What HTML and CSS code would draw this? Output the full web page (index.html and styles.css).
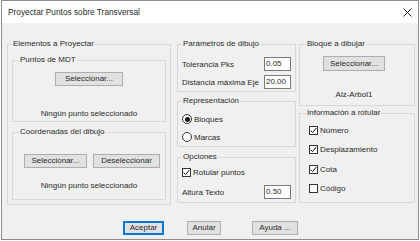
FILE: index.html
```html
<!DOCTYPE html>
<html lang="es">
<head>
<meta charset="utf-8">
<title>Proyectar Puntos sobre Transversal</title>
<link rel="stylesheet" href="styles.css">
</head>
<body>
<div class="window">
  <div class="titlebar">
    <span class="title">Proyectar Puntos sobre Transversal</span>
    <svg class="close" width="9" height="9" viewBox="0 0 9 9"><path d="M0.5 0.5L8.5 8.5M8.5 0.5L0.5 8.5" stroke="#222" stroke-width="1" fill="none"/></svg>
  </div>
  <div class="content">
    <div class="columns">
      <fieldset class="group g-elem">
        <legend>Elementos a Proyectar</legend>
        <fieldset class="group g-mdt">
          <legend>Puntos de MDT</legend>
          <button class="btn btn-sel1">Seleccionar...</button>
          <div class="status st1">Ningún punto seleccionado</div>
        </fieldset>
        <fieldset class="group g-coord">
          <legend>Coordenadas del dibujo</legend>
          <div class="btnrow">
            <button class="btn btn-sel2">Seleccionar...</button>
            <button class="btn btn-desel">Deseleccionar</button>
          </div>
          <div class="status st2">Ningún punto seleccionado</div>
        </fieldset>
      </fieldset>

      <div class="col col-mid">
        <fieldset class="group g-param">
          <legend>Parámetros de dibujo</legend>
          <div class="field"><span>Tolerancia Pks</span><span class="input">0.05</span></div>
          <div class="field"><span>Distancia máxima Eje</span><span class="input">20.00</span></div>
        </fieldset>
        <fieldset class="group g-repr">
          <legend>Representación</legend>
          <div class="opt"><span class="radio on"></span><span>Bloques</span></div>
          <div class="opt"><span class="radio"></span><span>Marcas</span></div>
        </fieldset>
        <fieldset class="group g-opc">
          <legend>Opciones</legend>
          <div class="opt"><span class="check"><svg width="7" height="7" viewBox="0 0 7 7"><path d="M0.6 3.6L2.6 5.6L6.4 0.9" stroke="#1a1a1a" stroke-width="1" fill="none"/></svg></span><span>Rotular puntos</span></div>
          <div class="field f-alt"><span>Altura Texto</span><span class="input">0.50</span></div>
        </fieldset>
      </div>

      <div class="col col-right">
        <fieldset class="group g-bloque">
          <legend>Bloque a dibujar</legend>
          <button class="btn btn-sel3">Seleccionar...</button>
          <div class="status st3">Alz-Arbol1</div>
        </fieldset>
        <fieldset class="group g-info">
          <legend>Información a rotular</legend>
          <div class="opt o-info"><span class="check"><svg width="7" height="7" viewBox="0 0 7 7"><path d="M0.6 3.6L2.6 5.6L6.4 0.9" stroke="#1a1a1a" stroke-width="1" fill="none"/></svg></span><span>Número</span></div>
          <div class="opt o-info"><span class="check"><svg width="7" height="7" viewBox="0 0 7 7"><path d="M0.6 3.6L2.6 5.6L6.4 0.9" stroke="#1a1a1a" stroke-width="1" fill="none"/></svg></span><span>Desplazamiento</span></div>
          <div class="opt o-info"><span class="check"><svg width="7" height="7" viewBox="0 0 7 7"><path d="M0.6 3.6L2.6 5.6L6.4 0.9" stroke="#1a1a1a" stroke-width="1" fill="none"/></svg></span><span>Cota</span></div>
          <div class="opt o-info"><span class="check"></span><span>Código</span></div>
        </fieldset>
      </div>
    </div>
    <div class="footer">
      <button class="btn b-ok">Aceptar</button>
      <button class="btn b-cancel">Anular</button>
      <button class="btn b-help">Ayuda ...</button>
    </div>
  </div>
</div>
</body>
</html>
```

FILE: styles.css
```css
* { box-sizing: border-box; }
body {
  margin: 0;
  background: #ffffff;
  font-family: "Liberation Sans", Arial, sans-serif;
  font-size: 8px;
  color: #2a2a2a;
}
.window {
  margin-left: 1px;
  width: 418px;
  height: 240px;
  border: 1px solid #8c8c8c;
  background: #f0f0f0;
  display: flex;
  flex-direction: column;
}
.titlebar {
  flex: none;
  height: 22px;
  background: #ffffff;
  display: flex;
  align-items: center;
  justify-content: space-between;
  padding: 0 6px 0 6px;
}
.title { font-size: 8.3px; }
.close { margin-top: 1px; }
.content {
  display: flex;
  flex-direction: column;
  padding: 16px 3px 0 5px;
}
.columns { display: flex; align-items: flex-start; }
.col { display: flex; flex-direction: column; }
.col-mid { width: 119px; margin-left: 6px; }
.col-right { width: 116px; margin-left: 3px; }

.group {
  margin: 0;
  padding: 0 4px;
  border: 1px solid #d8d8d8;
  min-width: 0;
  display: flex;
  flex-direction: column;
}
.group > legend {
  padding: 0 1px;
  margin-left: 0;
  line-height: 10px;
  height: 10px;
}

.g-elem { width: 164px; height: 166px; padding-top: 6px; }
.g-mdt { height: 67px; align-items: center; padding-top: 7px; }
.g-coord { height: 73px; margin-top: 5px; padding-top: 17px; }
.g-elem .group > legend { margin-left: 2px; }

.btn {
  font: inherit;
  color: #2a2a2a;
  background: #e1e1e1;
  border: 1px solid #adadad;
  border-radius: 0;
  padding: 0;
  height: 14px;
  line-height: 12px;
  margin: 0;
}
.btn-sel1 { width: 68px; }
.status { line-height: 10px; text-align: center; align-self: stretch; }
.st1 { margin-top: 23px; }
.btnrow { display: flex; padding-left: 7px; gap: 6px; }
.btn-sel2 { width: 63px; }
.btn-desel { width: 67px; }
.st2 { margin-top: 13px; }

.g-param { height: 53px; padding-top: 8px; gap: 4px; }
.g-repr { height: 51px; margin-top: 4px; padding-top: 6px; gap: 4px; }
.g-opc { height: 51px; margin-top: 5px; padding-top: 3px; gap: 6px; }

.field {
  display: flex;
  align-items: center;
  justify-content: space-between;
  height: 14px;
}
.input {
  width: 27px;
  height: 14px;
  background: #ffffff;
  border: 1px solid #7a7a7a;
  line-height: 12px;
  padding-left: 1px;
}
.opt {
  display: flex;
  align-items: center;
  height: 14px;
  gap: 2px;
}
.radio {
  width: 10px;
  height: 10px;
  border: 1px solid #333333;
  border-radius: 50%;
  background: #ffffff;
  display: flex;
  align-items: center;
  justify-content: center;
}
.radio.on::after {
  content: "";
  width: 5px;
  height: 5px;
  border-radius: 50%;
  background: #1a1a1a;
}
.check {
  width: 9px;
  height: 9px;
  border: 1px solid #333333;
  background: #ffffff;
  display: flex;
  align-items: center;
  justify-content: center;
}
.check svg { display: block; }

.g-bloque { height: 67px; padding-top: 7px; align-items: center; }
.g-bloque > legend { margin-left: 2px; }
.btn-sel3 { width: 62px; height: 15px; margin-right: 6px; }
.st3 { margin-top: 19px; padding-right: 6px; }
.g-info { height: 95px; margin-top: 2px; padding: 5px 4px 0 9px; gap: 5.5px; }
.g-info > legend { margin-left: -3px; }

.footer {
  display: flex;
  margin-top: 16px;
  padding-left: 116px;
}
.b-ok { width: 41px; border: 1px solid #0078d7; box-shadow: inset 0 0 0 1px #0078d7; }
.b-cancel { width: 34px; margin-left: 23px; }
.b-help { width: 46px; margin-left: 31px; }
```
